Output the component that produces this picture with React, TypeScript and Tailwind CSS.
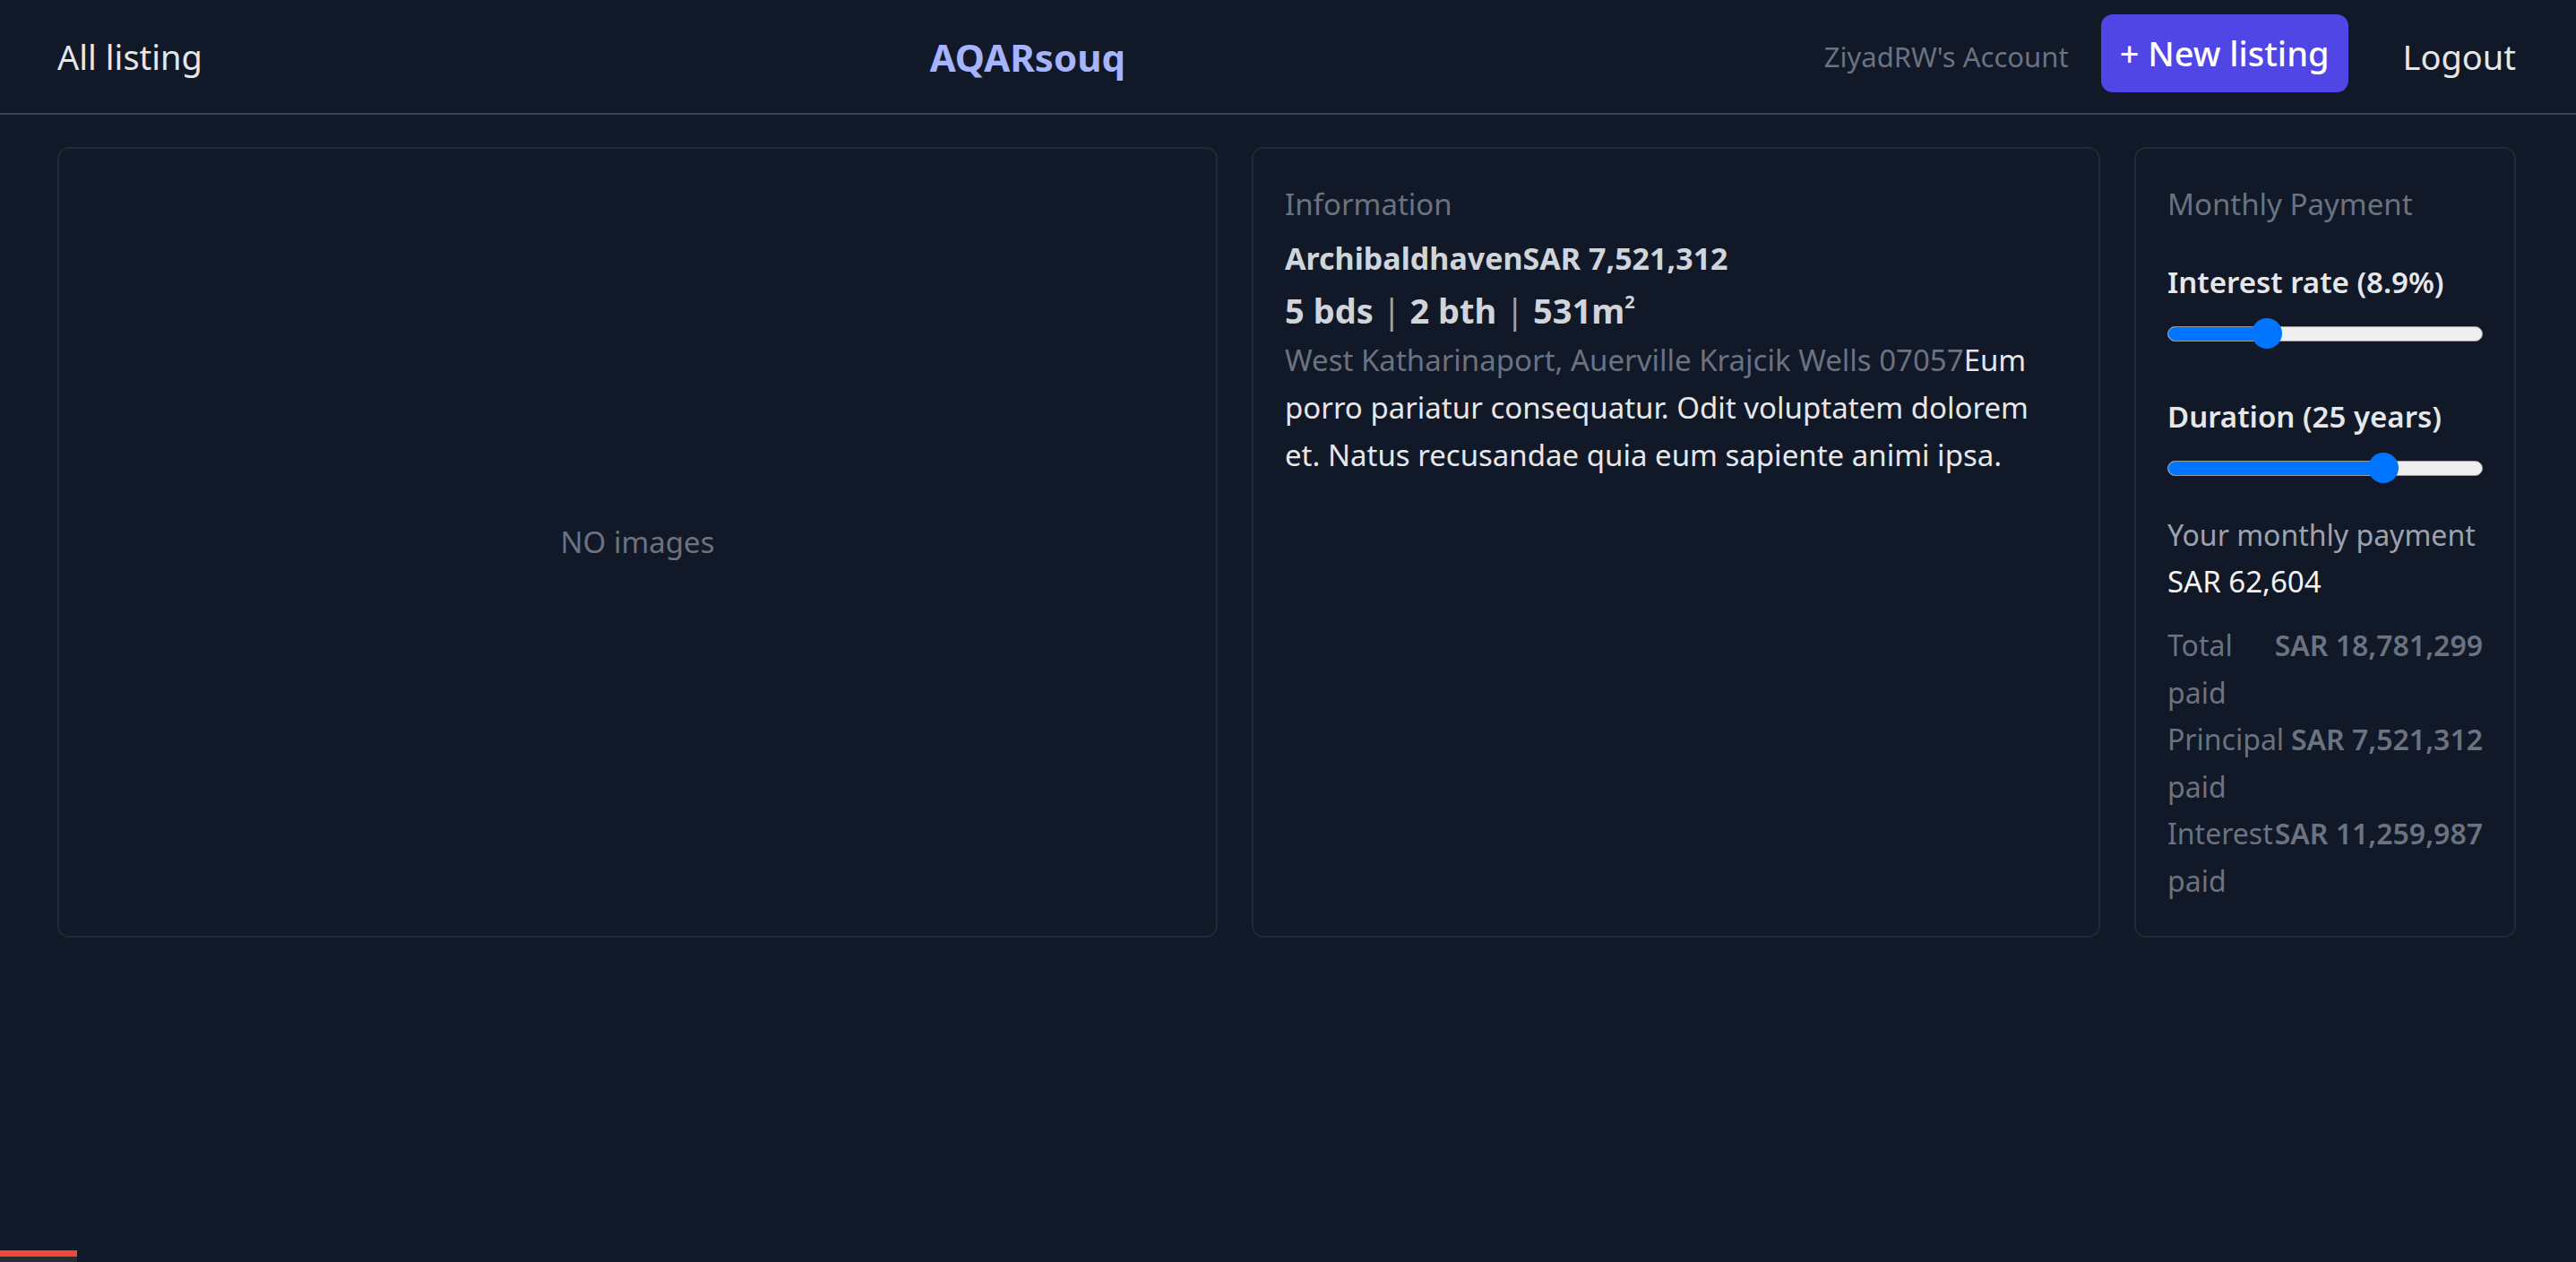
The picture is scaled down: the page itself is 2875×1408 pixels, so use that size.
const listing = {
  city: "Archibaldhaven",
  price: 7521312,
  beds: 5,
  baths: 2,
  area: 531,
  address: "West Katharinaport, Auerville Krajcik Wells 07057",
  description:
    "Eum porro pariatur consequatur. Odit voluptatem dolorem et. Natus recusandae quia eum sapiente animi ipsa.",
}

const fmt = (n: number) => "SAR " + n.toLocaleString("en-US")

function Slider({ value, min, max }: { value: number; min: number; max: number }) {
  // thumb is 34px, track 351px wide
  const f = (value - min) / (max - min)
  const center = 17 + f * (351 - 34)
  return (
    <div className="relative flex h-[34px] w-full items-center">
      <div className="h-[17px] w-full overflow-hidden rounded-full border border-[#9a9a9a] bg-[#efefef]">
        <div className="h-full bg-[#0075ff]" style={{ width: center }} />
      </div>
      <div
        className="absolute top-0 h-[34px] w-[34px] rounded-full bg-[#0075ff]"
        style={{ left: center - 17 }}
      />
    </div>
  )
}

function Row({ label, value }: { label: string; value: number }) {
  return (
    <div className="flex justify-between text-[32px] leading-[52.5px] text-[#6b7280]">
      <span className="min-w-0">{label}</span>
      <span className="shrink-0 font-semibold whitespace-nowrap">{fmt(value)}</span>
    </div>
  )
}

export default function App() {
  return (
    <div className="min-h-screen bg-[#111827] font-['Noto_Sans',sans-serif]">
      <header className="flex h-[128px] items-center justify-between border-b-2 border-[#374151] pr-[67px] pl-[64px]">
        <a className="text-[38px] text-[#e5e7eb]">All listing</a>
        <a className="ml-[32px] text-[42px] font-bold text-[#a5b4fc]">AQARsouq</a>
        <div className="flex items-center">
          <span className="text-[31px] text-[#6b7280]">ZiyadRW's Account</span>
          <button className="mb-[7px] ml-[36px] h-[87px] rounded-[13px] bg-[#4f46e5] px-[21px] text-[38px] font-medium text-white">
            + New listing
          </button>
          <a className="ml-[61px] text-[38px] text-[#e5e7eb]">Logout</a>
        </div>
      </header>

      <main className="grid grid-cols-[1295px_947px_426px] gap-[38px] pt-[36px] pr-[67px] pl-[64px]">
        <div className="flex items-center justify-center rounded-[13px] border-2 border-[#1f2937]">
          <span className="text-[33px] text-[#6b7280]">NO images</span>
        </div>

        <div className="rounded-[13px] border-2 border-[#1f2937] p-[35px]">
          <h2 className="text-[33px] leading-[53px] text-[#6b7280]">Information</h2>
          <div className="mt-[8px] text-[34px] leading-[53px] font-bold text-[#d1d5db]">
            {listing.city}
            {fmt(listing.price)}
          </div>
          <div className="mt-[3px] text-[38px] leading-[56px] font-bold text-[#d1d5db]">
            {listing.beds} bds <span className="font-normal text-[#9ca3af]">|</span> {listing.baths} bth{" "}
            <span className="font-normal text-[#9ca3af]">|</span> {listing.area}m
            <sup className="top-[-17px] text-[20px]">2</sup>
          </div>
          <p className="mt-[1px] text-[33px] leading-[53px]">
            <span className="text-[#6b7280]">{listing.address}</span>
            <span className="text-[#e5e7eb]">{listing.description}</span>
          </p>
        </div>

        <div className="rounded-[13px] border-2 border-[#1f2937] p-[35px]">
          <h2 className="text-[33px] leading-[53px] text-[#6b7280]">Monthly Payment</h2>
          <div className="mt-[34px] text-[33px] leading-[53px] font-semibold text-[#e5e7eb]">Interest rate (8.9%)</div>
          <div className="mt-[14px]">
            <Slider value={8.9} min={0} max={30} />
          </div>
          <div className="mt-[49px] text-[33px] leading-[53px] font-semibold text-[#e5e7eb]">Duration (25 years)</div>
          <div className="mt-[14px]">
            <Slider value={25} min={1} max={35} />
          </div>
          <div className="mt-[32px] text-[32px] leading-[52px] whitespace-nowrap text-[#9ca3af]">Your monthly payment</div>
          <div className="text-[33px] leading-[52px] text-[#f3f4f6]">{fmt(62604)}</div>
          <div className="mt-[19px]">
            <Row label="Total paid" value={18781299} />
            <Row label="Principal paid" value={7521312} />
            <Row label="Interest paid" value={11259987} />
          </div>
        </div>
      </main>

      <div className="fixed bottom-0 left-0 w-[86px]">
        <div className="h-[7px] bg-[#ef4a35]" />
        <div className="h-[6px] bg-[#292c35]" />
      </div>
    </div>
  )
}
